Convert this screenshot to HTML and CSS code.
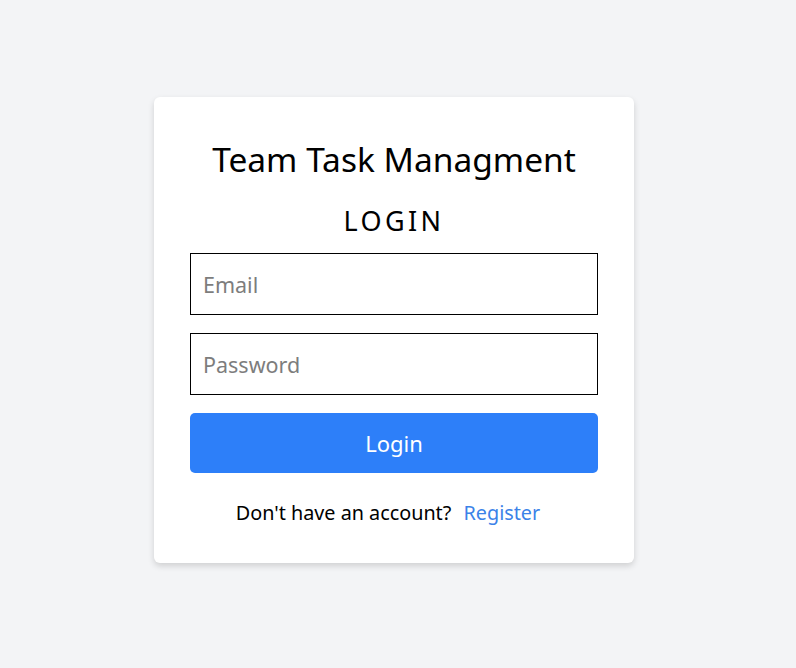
FILE: index.html
```html
<!DOCTYPE html>
<html>
<head>
<meta charset="utf-8">
<link rel="stylesheet" href="styles.css">
</head>
<body>
<main class="page">
  <form class="card">
    <h1 class="title">Team Task Managment</h1>
    <h2 class="subtitle">LOGIN</h2>
    <input class="field" type="email" placeholder="Email">
    <input class="field" type="password" placeholder="Password">
    <button class="btn" type="button">Login</button>
    <p class="footer">Don't have an account? <a class="link" href="#">Register</a></p>
  </form>
</main>
</body>
</html>
```
FILE: styles.css
```css
* { box-sizing: border-box; }
html, body { margin: 0; padding: 0; }
body {
  background: #f3f4f6;
  font-family: "Noto Sans", "Open Sans", sans-serif;
  color: #000;
  width: 796px;
  height: 668px;
}
.page {
  display: flex;
  justify-content: center;
  padding-top: 97px;
  padding-right: 8px;
}
.card {
  width: 480px;
  height: 466px;
  background: #fff;
  border-radius: 6px;
  box-shadow: 0 3px 6px rgba(0,0,0,0.15);
  padding: 36px 36px 0;
  display: flex;
  flex-direction: column;
  align-items: stretch;
}
.title {
  margin: 0;
  font-size: 33.5px;
  font-weight: 400;
  text-align: center;
  line-height: 52px;
}
.subtitle {
  margin: 18px 0 0;
  font-size: 27px;
  font-weight: 400;
  text-align: center;
  letter-spacing: 3.4px;
  line-height: 36px;
}
.field {
  height: 62px;
  border: 1px solid #000;
  border-radius: 0;
  padding: 0 12px;
  font-family: inherit;
  font-size: 21.5px;
  color: #000;
  margin-top: 18px;
  outline: none;
}
.subtitle + .field { margin-top: 14px; }
.field::placeholder { color: #7d7d7d; }
.btn {
  margin-top: 18px;
  height: 60px;
  border: 0;
  border-radius: 5px;
  background: #2d7ff9;
  color: #fff;
  font-family: inherit;
  font-size: 22px;
  cursor: pointer;
}
.footer {
  margin: 25px 0 0;
  padding-right: 12px;
  text-align: center;
  font-size: 19.8px;
  line-height: 30px;
}
.link {
  color: #3b82e8;
  text-decoration: none;
  margin-left: 7px;
}
```
